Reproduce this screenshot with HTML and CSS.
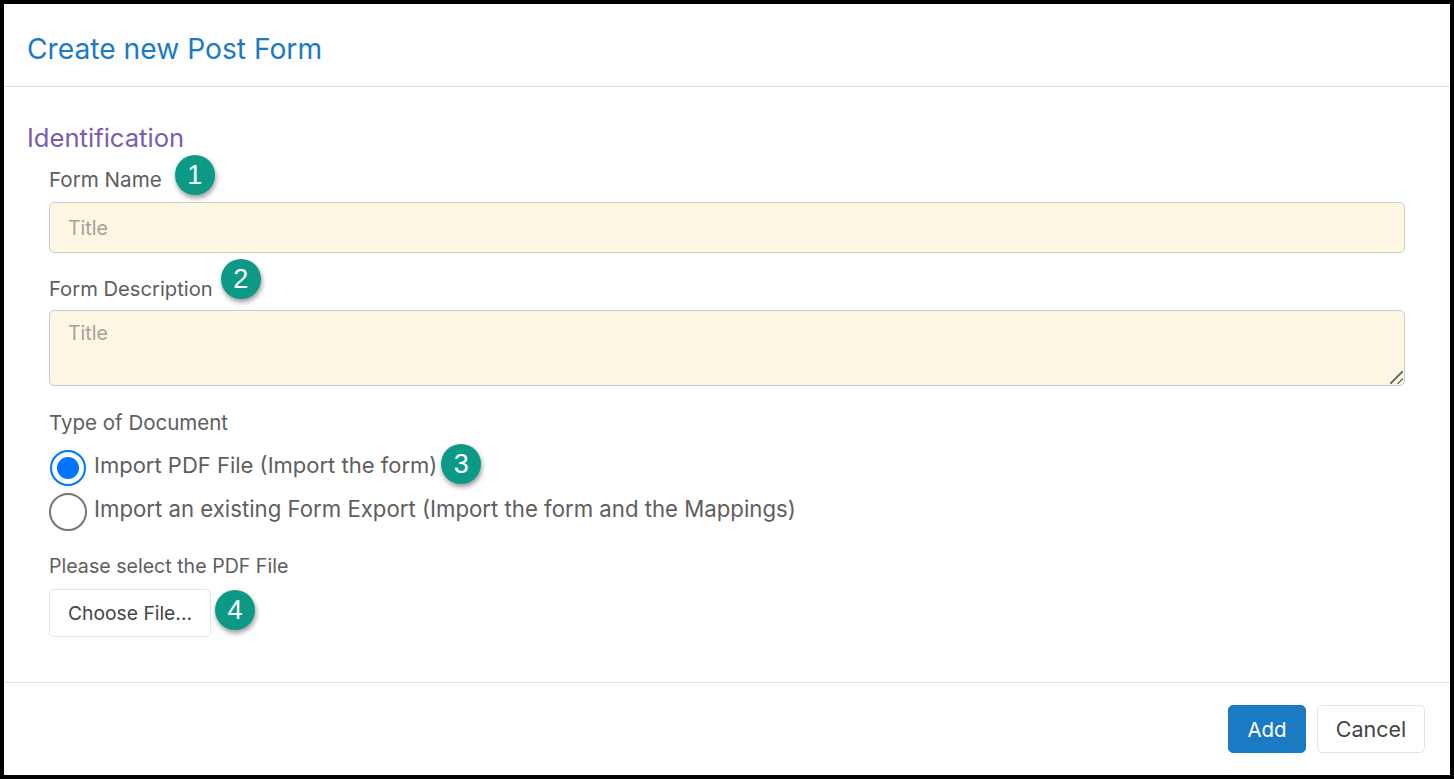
FILE: index.html
```html
<!DOCTYPE html>
<html lang="en">
<head>
  <meta charset="UTF-8" />
  <meta name="viewport" content="width=device-width, initial-scale=1.0" />
  <title>Create new Post Form</title>
  <link rel="stylesheet" href="styles.css">
</head>
<body>

  <div class="modal">
    <div class="modal-header">
      <h1>Create new Post Form</h1>
    </div>

    <div class="modal-body">
      <h2>Identification</h2>

      <div class="field field-name">
        <div class="label-row">
          <label for="form-name">Form Name</label>
          <span class="badge badge-1">1</span>
        </div>
        <input id="form-name" type="text" placeholder="Title">
      </div>

      <div class="field field-desc">
        <div class="label-row">
          <label for="form-desc">Form Description</label>
          <span class="badge badge-2">2</span>
        </div>
        <textarea id="form-desc" placeholder="Title"></textarea>
      </div>

      <div class="field field-type">
        <div class="label-row">
          <label>Type of Document</label>
        </div>
        <div class="radio-row">
          <input type="radio" name="doc-type" id="doc-pdf" checked>
          <label for="doc-pdf">Import PDF File (Import the form)</label>
          <span class="badge badge-3">3</span>
        </div>
        <div class="radio-row">
          <input type="radio" name="doc-type" id="doc-export">
          <label for="doc-export">Import an existing Form Export (Import the form and the Mappings)</label>
        </div>
      </div>

      <div class="field field-file">
        <div class="label-row">
          <label>Please select the PDF File</label>
        </div>
        <div class="file-row">
          <button class="btn btn-file">Choose File...</button>
          <span class="badge badge-4">4</span>
        </div>
      </div>
    </div>

    <div class="modal-footer">
      <button class="btn btn-primary">Add</button>
      <button class="btn btn-cancel">Cancel</button>
    </div>
  </div>

</body>
</html>
```

FILE: styles.css
```css
* {
  box-sizing: border-box;
}

html, body {
  height: 100%;
}

body {
  margin: 0;
  font-family: Inter, "Liberation Sans", sans-serif;
  color: #5e5e5e;
  background-color: white;
}

.modal {
  height: 779px;
  border: 4px solid black;
  display: flex;
  flex-direction: column;
  background-color: white;
}

.modal-header {
  height: 83px;
  padding: 8px 23px 0;
  display: flex;
  align-items: center;
  border-bottom: 1px solid #dee2e6;
}

h1 {
  margin: 0;
  font-size: 28.2px;
  font-weight: 400;
  color: #1a7ac4;
}

.modal-body {
  flex: 1;
  padding: 36px 45px 0 23px;
}

h2 {
  margin: 0 0 13px;
  height: 30px;
  line-height: 30px;
  font-size: 25.6px;
  font-weight: 400;
  color: #7b5cb0;
}

.field {
  margin-left: 22px;
}

.label-row {
  height: 28px;
  display: flex;
  align-items: center;
}

label {
  font-size: 20.2px;
  color: #5e5e5e;
}

/* numbered callouts sit over the form, a few px above their row */
.badge {
  position: relative;
  flex: none;
  width: 40px;
  height: 40px;
  border-radius: 50%;
  display: flex;
  align-items: center;
  justify-content: center;
  margin: -6px 0 -6px 11px;
  background-color: #0c9a87;
  color: white;
  font-family: "Liberation Sans", Arial, sans-serif;
  font-size: 27px;
  box-shadow: 1px 3px 5px rgba(0, 0, 0, 0.4);
}

.badge-1 {
  top: -4px;
  margin-left: 13px;
}

.badge-2 {
  top: -9px;
  margin-left: 8px;
}

.badge-3 {
  top: -4px;
  margin: 0 0 0 4px;
}

.badge-4 {
  top: -3px;
  margin: 0 0 0 4px;
}

.field-name label {
  font-size: 20.6px;
}

.field-name .label-row {
  margin-top: -1px;
  margin-bottom: 9px;
}

input[type="text"],
textarea {
  display: block;
  width: 100%;
  padding: 0 18px;
  font-family: inherit;
  font-size: 19.5px;
  color: #5e5e5e;
  background-color: #fdf6e3;
  border: 1px solid #ccc;
  border-radius: 5px;
  outline: none;
}

input[type="text"] {
  height: 51px;
}

textarea {
  height: 76px;
  padding-top: 10px;
}

textarea::-webkit-resizer {
  background:
    linear-gradient(135deg, transparent 46%, #777 46%, #777 56%, transparent 56%) 1px 1px / 13px 13px no-repeat,
    linear-gradient(135deg, transparent 46%, #777 46%, #777 62%, transparent 62%) 8px 8px / 6px 6px no-repeat;
}

::placeholder {
  color: #a3a199;
  opacity: 1;
}

.field-desc {
  margin-top: 21px;
}

.field-desc .label-row {
  margin-bottom: 8px;
}

.field-type {
  margin-top: 22px;
}

.field-type .label-row {
  margin-bottom: 13px;
}

.field-type .label-row label {
  font-size: 20.5px;
}

.radio-row {
  height: 38px;
  margin-bottom: 6px;
  display: flex;
  align-items: center;
}

.radio-row label {
  font-size: 22.2px;
  margin-left: 7px;
  margin-top: -8px;
}

.radio-row .badge-3 {
  margin-left: 4px;
}

input[type="radio"]:checked + label {
  font-size: 22px;
  margin-top: -6px;
}

input[type="radio"] {
  appearance: none;
  flex: none;
  width: 38px;
  height: 38px;
  margin: 0;
  border: 2px solid #767676;
  border-radius: 50%;
  background-color: white;
  background-clip: content-box;
}

input[type="radio"]:checked {
  width: 36px;
  height: 36px;
  margin: 0 1px;
  padding: 5px;
  border-color: #0075ff;
  background-color: #0075ff;
}

.field-file {
  margin-top: 21px;
}

.field-file .label-row {
  margin-bottom: 9px;
}

.field-file .label-row label {
  font-size: 19.6px;
}

.file-row {
  display: flex;
  align-items: center;
}

.btn {
  height: 48px;
  font-family: inherit;
  font-size: 19.3px;
  border-radius: 5px;
  border: 1px solid #e3e4ea;
  background-color: white;
  color: #444;
  padding: 0;
}

.btn-file {
  width: 162px;
}

.modal-footer {
  height: 93px;
  display: flex;
  justify-content: flex-end;
  gap: 11px;
  padding: 22px 25px 0 0;
  border-top: 1px solid #dee2e6;
}

.btn-primary {
  width: 78px;
  font-size: 20.5px;
  background-color: #1a7ac4;
  border-color: #1a7ac4;
  color: white;
}

.btn-cancel {
  width: 108px;
  font-size: 21.5px;
}
```
